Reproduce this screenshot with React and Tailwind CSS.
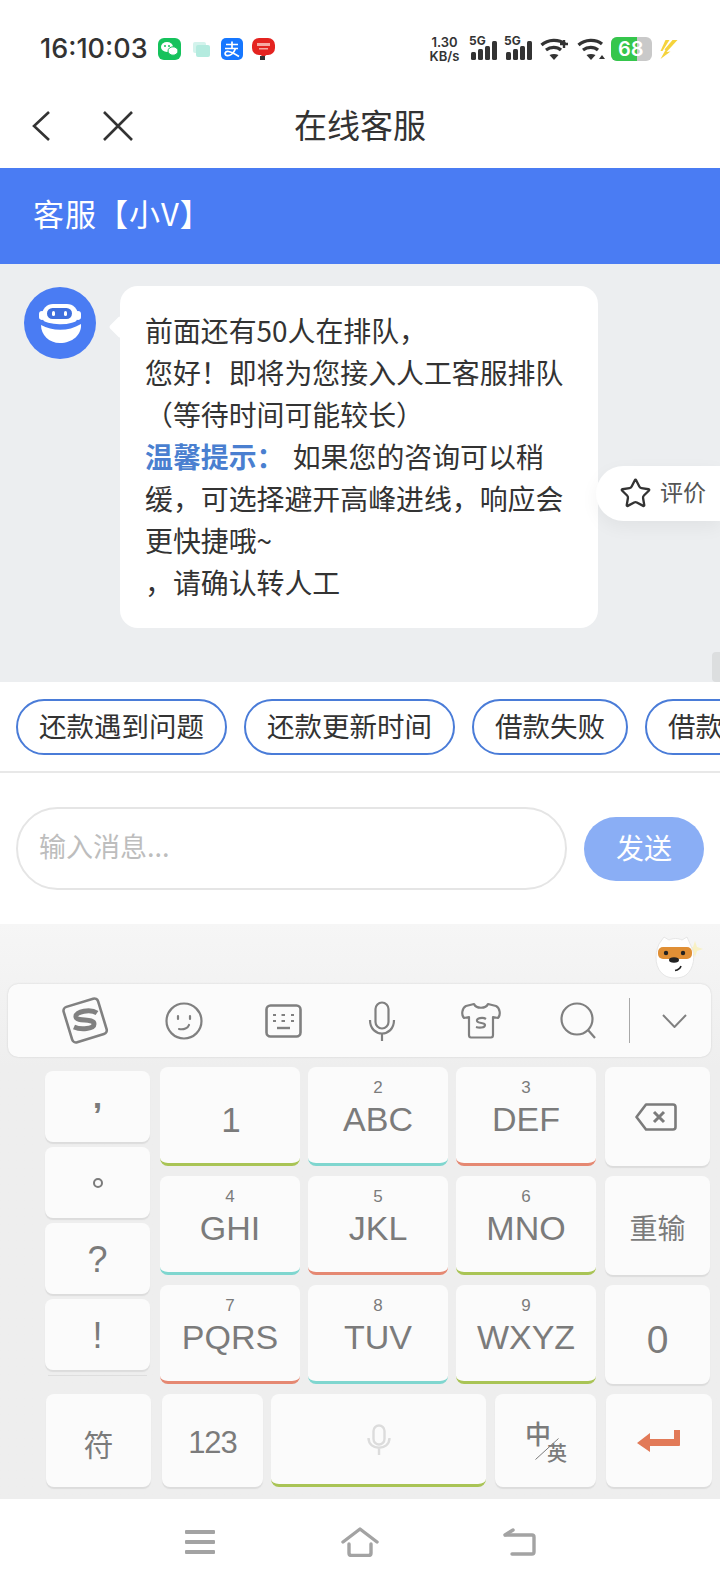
import { Star } from "lucide-react";

function Signal() {
  return (
    <div className="relative h-[24px] w-[27px]">
      <span className="absolute left-[-2px] top-[-2px] font-['Inter',sans-serif] text-[12px] font-bold leading-[12px] text-[#333]">5G</span>
      <svg viewBox="0 0 27 24" className="h-[24px] w-[27px]" fill="#333">
        <rect x="0" y="15" width="5" height="8" rx="1.5" />
        <rect x="7" y="12" width="5" height="11" rx="1.5" />
        <rect x="14" y="9" width="5" height="14" rx="1.5" />
        <rect x="21" y="4" width="5" height="19" rx="1.5" />
      </svg>
    </div>
  );
}

function Wifi({ mark }) {
  return (
    <svg viewBox="0 0 28 24" className="h-[24px] w-[28px]" fill="none" stroke="#333" strokeWidth="3.2">
      <path d="M1.5 8 C8 2 19 2 25 7" />
      <path d="M6 13 C10.5 9.5 17 9.5 21 13" />
      <path d="M14 23 L9.5 18 C12.5 16.5 15.5 16.5 18.5 18 Z" fill="#333" stroke="none" />
      {mark === "plus" && <path d="M24 3 V11 M20 7 H28" strokeWidth="2.4" />}
      {mark === "up" && <path d="M22 22 L25 18 L28 22 Z" fill="#333" stroke="none" />}
    </svg>
  );
}

function StatusBar() {
  return (
    <div className="flex h-[84px] items-center pl-[40px] pt-[14px]">
      <div className="w-[108px] whitespace-nowrap font-['Inter',sans-serif] text-[27px] font-medium leading-[30px] text-[#333]">16:10:03</div>
      <svg viewBox="0 0 23 22" className="ml-[10px] h-[22px] w-[23px]">
        <rect width="23" height="22" rx="6" fill="#15c25c" />
        <ellipse cx="9" cy="9" rx="6" ry="5" fill="#fff" />
        <ellipse cx="15" cy="13" rx="5" ry="4.2" fill="#fff" stroke="#15c25c" />
        <circle cx="7" cy="8" r="1" fill="#15c25c" />
        <circle cx="11" cy="8" r="1" fill="#15c25c" />
      </svg>
      <svg viewBox="0 0 17 15" className="ml-[12px] h-[15px] w-[17px]">
        <rect x="0" y="0" width="13" height="11" rx="2" fill="#d3f3ec" />
        <rect x="3" y="3" width="14" height="12" rx="2" fill="#b4ebdf" />
      </svg>
      <svg viewBox="0 0 22 22" className="ml-[11px] h-[22px] w-[22px]">
        <rect width="22" height="22" rx="5" fill="#1677ff" />
        <path d="M5 6.5 H17 M11 3.5 V10 M4 10.5 H17 M14.5 10.5 C13 15 9 18.5 5.5 17.5 C3 16.5 4 13 7.5 13.5 C10.5 14 14 16 18 18.5" fill="none" stroke="#fff" strokeWidth="1.7" />
      </svg>
      <svg viewBox="0 0 23 22" className="ml-[9px] h-[22px] w-[23px]">
        <rect x="0" y="0" width="23" height="17" rx="7" fill="#e42320" />
        <path d="M7 16 H16 L11.5 19 Z" fill="#e42320" />
        <rect x="5" y="5" width="13" height="3" fill="#f6a9a3" />
        <rect x="7" y="10" width="9" height="1.5" fill="#f6a9a3" />
        <rect x="8" y="18" width="5" height="4" fill="#333" />
      </svg>
      <div className="ml-[154px] flex w-[31px] flex-col items-center font-['Inter',sans-serif] text-[13px] font-semibold leading-[14px] text-[#333]">
        <span>1.30</span>
        <span>KB/s</span>
      </div>
      <div className="ml-[11px]"><Signal /></div>
      <div className="ml-[8px]"><Signal /></div>
      <div className="ml-[7px]"><Wifi mark="plus" /></div>
      <div className="ml-[9px]"><Wifi mark="up" /></div>
      <div className="relative ml-[6px] flex h-[24px] w-[41px] overflow-hidden rounded-[6px] bg-[#c9c9c9]">
        <div className="h-full w-[26px] bg-[#35c64c]" />
        <span className="absolute left-[7px] top-0 font-['Inter',sans-serif] text-[20px] font-semibold leading-[24px] text-white">68</span>
      </div>
      <svg viewBox="0 0 18 20" className="ml-[7px] h-[20px] w-[19px]" fill="#f5d33c">
        <path d="M6 1 H10 L3 12 L1 12 Z" />
        <path d="M13 1 H18 L7 13 L11 12.5 L1 20 L6 11 L5 10.5 Z" />
      </svg>
    </div>
  );
}

function TitleBar() {
  return (
    <div className="grid h-[84px] grid-cols-[1fr_auto_1fr] items-center">
      <div className="flex items-center pl-[32px]">
        <svg viewBox="0 0 18 30" className="h-[30px] w-[18px]" fill="none" stroke="#333" strokeWidth="2.6">
          <path d="M17 1 L2 15 L17 29" />
        </svg>
        <svg viewBox="0 0 30 30" className="ml-[53px] h-[30px] w-[30px]" fill="none" stroke="#333" strokeWidth="2.6">
          <path d="M1 1 L29 29 M29 1 L1 29" />
        </svg>
      </div>
      <div className="mt-[-5px] text-[33px] leading-[40px] text-[#333]">在线客服</div>
      <div />
    </div>
  );
}

function Robot() {
  return (
    <div className="h-[72px] w-[72px] shrink-0 rounded-full bg-[#4a7cf3]">
      <svg viewBox="0 0 72 72" className="h-[72px] w-[72px]">
        <rect x="15" y="24" width="6" height="9" rx="3" fill="#fff" />
        <rect x="51" y="24" width="6" height="9" rx="3" fill="#fff" />
        <rect x="18" y="17" width="36" height="22" rx="11" fill="#fff" />
        <rect x="23" y="21" width="25" height="11" rx="5.5" fill="#3f6fdd" />
        <rect x="28" y="24" width="3" height="5" rx="1.5" fill="#fff" />
        <rect x="40" y="24" width="3" height="5" rx="1.5" fill="#fff" />
        <path d="M13 33 C26 40 44 42 59 33" fill="none" stroke="#4a7cf3" strokeWidth="3.4" />
        <path d="M17 38 C28 44 44 45 57 37 C58 48 48 56 36 56 C25 56 17 48 17 38 Z" fill="#fff" />
      </svg>
    </div>
  );
}

function Chat() {
  return (
    <div className="relative h-[418px] overflow-hidden bg-[#eceef0] pl-[24px] pt-[22px]">
      <div className="flex items-start">
        <div className="mt-px"><Robot /></div>
        <div className="relative ml-[24px] w-[478px] rounded-[18px] bg-white py-[24px] pl-[25px] pr-[23px] text-[27.9px] leading-[42px] text-[#333]">
          <div className="absolute left-[-8px] top-[33px] h-[16px] w-[16px] rotate-45 rounded-[2px] bg-white" />
          <p className="mt-[-1px]">前面还有50人在排队，</p>
          <p>您好！即将为您接入人工客服排队</p>
          <p>（等待时间可能较长）</p>
          <p><span className="mr-[2px] font-bold text-[#4a7fd0]">温馨提示：</span> 如果您的咨询可以稍缓，可选择避开高峰进线，响应会更快捷哦~</p>
          <p className="mb-px">，请确认转人工</p>
        </div>
      </div>
      <div className="absolute right-0 top-[202px] flex h-[55px] w-[124px] items-center rounded-l-full bg-white pl-[23px] shadow-[0_6px_18px_rgba(0,0,0,0.05)]">
        <Star size={33} strokeWidth={1.7} className="text-[#333]" />
        <span className="mb-[4px] ml-[8px] whitespace-nowrap text-[23px] text-[#555]">评价</span>
      </div>
      <div className="absolute right-0 top-[388px] h-[30px] w-[8px] rounded-l-[4px] bg-[#dcdedf]" />
    </div>
  );
}

function QuickRow() {
  const chips = ["还款遇到问题", "还款更新时间", "借款失败", "借款进度"];
  return (
    <div className="flex h-[91px] gap-[17px] overflow-hidden border-b-2 border-[#e8e8e8] bg-white pl-[16px] pt-[17px]">
      {chips.map((chip) => (
        <div
          key={chip}
          className="flex h-[56px] shrink-0 items-center rounded-full border-2 border-[#4a7cd8] px-[21px] pb-[2px] text-[27.5px] text-[#333]"
        >
          {chip}
        </div>
      ))}
    </div>
  );
}

function InputRow() {
  return (
    <div className="flex h-[151px] items-start bg-white pl-[16px] pt-[34px]">
      <div className="flex h-[83px] w-[551px] items-center rounded-full border-2 border-[#e5e5e5] pb-[4px] pl-[21px] text-[27px] text-[#bdbdbd]">
        输入消息...
      </div>
      <div className="ml-[17px] mt-[10px] flex h-[64px] w-[120px] items-center justify-center rounded-full bg-[#8aaef5] pb-[4px] text-[28px] text-white">
        发送
      </div>
    </div>
  );
}

function Fox() {
  return (
    <svg viewBox="0 0 48 44" className="h-[44px] w-[48px]">
      <path d="M40 6 L42 12 L48 14 L42 16 L40 22 L38 16 L33 14 L38 12 Z" fill="#f8f1c4" />
      <path d="M4 9 L9 2 L14 5 C18 3 23 3 27 5 L32 2 L36 11 C41 20 39 34 31 40 C26 44 14 44 9 40 C0 34 -1 20 4 9 Z" fill="#fff" stroke="#e6e6e6" />
      <rect x="3" y="12" width="34" height="12" rx="5" fill="#e08f35" />
      <circle cx="11" cy="18" r="2.2" fill="#222" />
      <circle cx="28" cy="18" r="2.2" fill="#222" />
      <ellipse cx="19" cy="25" rx="5" ry="2.8" fill="#222" />
      <path d="M26 31 C25 34 23 35 20 35.5" fill="none" stroke="#222" strokeWidth="1.6" />
    </svg>
  );
}

function Toolbar() {
  return (
    <div className="ml-[8px] flex h-[73px] w-[703px] items-center rounded-[10px] bg-[#fbfbfb] shadow-[0_0_2px_rgba(0,0,0,0.15)]">
      <svg viewBox="0 0 49 49" className="ml-[53px] h-[49px] w-[49px]" fill="none" stroke="#808080">
        <rect x="6" y="6" width="36" height="37" rx="4" strokeWidth="2.6" transform="rotate(-17 24 24)" />
        <path d="M36 17 C30 13 14 15 15 21 C16 26 33 22 33 28 C33 33 20 34 13 31" strokeWidth="5" />
      </svg>
      <svg viewBox="0 0 38 38" className="ml-[55px] h-[38px] w-[38px]" fill="none" stroke="#808080" strokeWidth="2.2">
        <circle cx="19" cy="19" r="17.5" />
        <path d="M13 14 V17 M25 14 V17" strokeLinecap="round" />
        <path d="M14 27 C19 28 23 26 24 23" strokeLinecap="round" />
      </svg>
      <svg viewBox="0 0 37 34" className="ml-[62px] h-[34px] w-[37px]" fill="none" stroke="#808080" strokeWidth="2.6">
        <rect x="1.5" y="1.5" width="34" height="31" rx="4" />
        <path d="M8 11 H11 M16.5 11 H20 M26 11 H29 M8 17 H11 M16.5 17 H20 M26 17 H29" strokeWidth="2" />
        <path d="M12 24 H25" strokeWidth="2.4" />
      </svg>
      <svg viewBox="0 0 28 40" className="ml-[66px] h-[40px] w-[28px]" fill="none" stroke="#808080" strokeWidth="2.2">
        <rect x="7.5" y="1.5" width="13" height="26" rx="6.5" />
        <path d="M2 19 C2 37 26 37 26 19 M14 32 V40" />
      </svg>
      <svg viewBox="0 0 42 37" className="ml-[64px] h-[37px] w-[42px]" fill="none" stroke="#808080" strokeWidth="2.2" strokeLinejoin="round">
        <path d="M14 2 C16 7 26 7 28 2 L36 4 C40 6 41 13 38 16 L33 15 V33 C33 35 32 35.5 31 35.5 H11 C10 35.5 9 35 9 33 V15 L4 16 C1 13 2 6 6 4 Z" />
        <path d="M26 17 C23 15 16 16 17 19 C18 22 25 20 25 23 C25 26 19 26 16 25" strokeWidth="2.2" />
      </svg>
      <svg viewBox="0 0 37 37" className="ml-[58px] h-[37px] w-[37px]" fill="none" stroke="#808080" strokeWidth="2.2">
        <circle cx="17" cy="17" r="15.5" />
        <path d="M28 28 L35 36" />
      </svg>
      <div className="ml-[32px] h-[45px] w-px bg-[#a8a8a8]" />
      <svg viewBox="0 0 25 14" className="ml-[32px] h-[14px] w-[25px]" fill="none" stroke="#808080" strokeWidth="2">
        <path d="M1 1 L12.5 13 L24 1" />
      </svg>
    </div>
  );
}

const keyBase = "flex rounded-[8px] bg-[#fbfbfb] text-[#7b7b7b]";
const plainShadow = "shadow-[0_2px_1px_#dcdcdc]";

function LetterKey({ digit, letters, edge }) {
  return (
    <div className={`${keyBase} ${edge} flex-col items-center border-b-[3px] pt-[10px] font-['Liberation_Sans',sans-serif]`}>
      <span className="text-[17px] leading-[22px]">{digit}</span>
      <span className="text-[34px] leading-[40px]">{letters}</span>
    </div>
  );
}

function Keys() {
  return (
    <div className="ml-[45px] mt-[10px] flex">
      <div className="mt-[4px] w-[105px]">
        <div className="flex flex-col gap-[5px]">
          <div className={`${keyBase} ${plainShadow} h-[71px] items-center justify-center font-['Liberation_Sans',sans-serif] text-[34px]`}>
            <span className="mt-[-22px] font-bold leading-none">,</span>
          </div>
          <div className={`${keyBase} ${plainShadow} h-[71px] items-center justify-center`}>
            <span className="h-[10px] w-[10px] rounded-full border-2 border-[#7b7b7b]" />
          </div>
          <div className={`${keyBase} ${plainShadow} h-[71px] items-center justify-center pt-[3px] font-['Liberation_Sans',sans-serif] text-[36px]`}>?</div>
          <div className={`${keyBase} ${plainShadow} h-[71px] items-center justify-center pt-[2px] font-['Liberation_Sans',sans-serif] text-[36px]`}>!</div>
        </div>
        <div className="mx-[3px] mt-[5px] h-px bg-[#dedede]" />
      </div>
      <div className="ml-[10px] grid grid-cols-[140px_140px_140px_106px] auto-rows-[99px] gap-x-[8px] gap-y-[10px]">
        <div className={`${keyBase} items-center justify-center border-b-[3px] border-[#a9c455] pl-[2px] pt-[10px] font-['Liberation_Sans',sans-serif] text-[35px]`}>1</div>
        <LetterKey digit="2" letters="ABC" edge="border-[#7fd6cf]" />
        <LetterKey digit="3" letters="DEF" edge="border-[#e58872]" />
        <div className={`${keyBase} ${plainShadow} ml-px items-center justify-center pr-[3px]`}>
          <svg viewBox="0 0 42 28" className="h-[28px] w-[42px]" fill="none" stroke="#7b7b7b" strokeWidth="2.6" strokeLinejoin="round">
            <path d="M11 1.5 H38 C39.5 1.5 40.5 2.5 40.5 4 V24 C40.5 25.5 39.5 26.5 38 26.5 H11 L1.5 14 Z" />
            <path d="M19 9 L29 19 M29 9 L19 19" strokeWidth="3" />
          </svg>
        </div>
        <LetterKey digit="4" letters="GHI" edge="border-[#7fd6cf]" />
        <LetterKey digit="5" letters="JKL" edge="border-[#e58872]" />
        <LetterKey digit="6" letters="MNO" edge="border-[#a9c455]" />
        <div className={`${keyBase} ${plainShadow} ml-px items-center justify-center pt-[2px] text-[28px]`}>重输</div>
        <LetterKey digit="7" letters="PQRS" edge="border-[#e58872]" />
        <LetterKey digit="8" letters="TUV" edge="border-[#7fd6cf]" />
        <LetterKey digit="9" letters="WXYZ" edge="border-[#a9c455]" />
        <div className={`${keyBase} ${plainShadow} ml-px items-center justify-center pt-[12px] font-['Liberation_Sans',sans-serif] text-[39px]`}>0</div>
      </div>
    </div>
  );
}

function BottomRow() {
  return (
    <div className="ml-[46px] mt-[10px] flex h-[93px]">
      <div className={`${keyBase} ${plainShadow} w-[105px] items-center justify-center pt-[6px] text-[30px]`}>符</div>
      <div className={`${keyBase} ${plainShadow} ml-[11px] w-[101px] items-center justify-center pt-[5px] font-['Liberation_Sans',sans-serif] text-[31px] tracking-[-1px]`}>123</div>
      <div className={`${keyBase} ml-[8px] w-[215px] items-center justify-center border-b-[3px] border-[#a9c455]`}>
        <svg viewBox="0 0 24 31" className="h-[31px] w-[24px]" fill="none" stroke="#dcdcdc" strokeWidth="2.4">
          <rect x="6.5" y="1.5" width="11" height="19" rx="5.5" />
          <path d="M1.5 14 C1.5 27 22.5 27 22.5 14 M12 24 V31" />
        </svg>
      </div>
      <div className={`${keyBase} ${plainShadow} relative ml-[9px] w-[101px] font-medium`}>
        <span className="absolute left-[30px] top-[26px] text-[26px] leading-[26px]">中</span>
        <span className="absolute left-[52px] top-[49px] text-[20px] leading-[20px]">英</span>
        <svg viewBox="0 0 24 22" className="absolute left-[40px] top-[44px] h-[22px] w-[24px]" fill="none" stroke="#7b7b7b">
          <path d="M0.5 21.5 L23.5 0.5" />
        </svg>
      </div>
      <div className={`${keyBase} ${plainShadow} ml-[10px] w-[106px] items-center justify-center pr-[2px]`}>
        <svg viewBox="0 0 43 23" className="h-[23px] w-[43px]" fill="#e27a58">
          <path d="M0 14 L13 4 V10 H37 V1 H43 V16 C43 17 42 17 41 17 H13 V23 Z" />
        </svg>
      </div>
    </div>
  );
}

function NavBar() {
  return (
    <div className="flex h-[85px] items-center bg-white pl-[185px]">
      <svg viewBox="0 0 30 24" className="h-[24px] w-[30px]" fill="#a3a3a3">
        <rect width="30" height="4" rx="1" />
        <rect y="10" width="30" height="4" rx="1" />
        <rect y="20" width="30" height="4" rx="1" />
      </svg>
      <svg viewBox="0 0 38 30" className="ml-[126px] h-[30px] w-[38px]" fill="none" stroke="#a3a3a3" strokeWidth="3.4" strokeLinecap="round" strokeLinejoin="round">
        <path d="M2 15 L19 2 L36 15" />
        <path d="M8 17 V26 C8 27.5 9 28.5 10.5 28.5 H27.5 C29 28.5 30 27.5 30 26 V17" />
      </svg>
      <svg viewBox="0 0 33 28" className="ml-[124px] h-[28px] w-[33px]" fill="none" stroke="#a3a3a3" strokeWidth="3.4" strokeLinecap="round" strokeLinejoin="round">
        <path d="M3 7 H29 C30.5 7 31 8 31 9 V24 C31 25.5 30.5 26 29 26 H9" />
        <path d="M2 7 L10 2" />
      </svg>
    </div>
  );
}

export default function App() {
  return (
    <div className="h-[1584px] w-[720px] overflow-hidden bg-white font-['Noto_Sans_CJK_SC',sans-serif]">
      <StatusBar />
      <TitleBar />
      <div className="flex h-[96px] items-center bg-[#4a7cf3] pb-[5px] pl-[33px] text-[31px] tracking-[1px] text-white">客服【小V】</div>
      <Chat />
      <QuickRow />
      <InputRow />
      <div className="h-[575px] bg-gradient-to-b from-[#f6f6f6] to-[#eeeeee] to-[25%]">
        <div className="flex h-[60px] justify-end pr-[17px] pt-[11px]"><Fox /></div>
        <Toolbar />
        <Keys />
        <BottomRow />
      </div>
      <NavBar />
    </div>
  );
}
